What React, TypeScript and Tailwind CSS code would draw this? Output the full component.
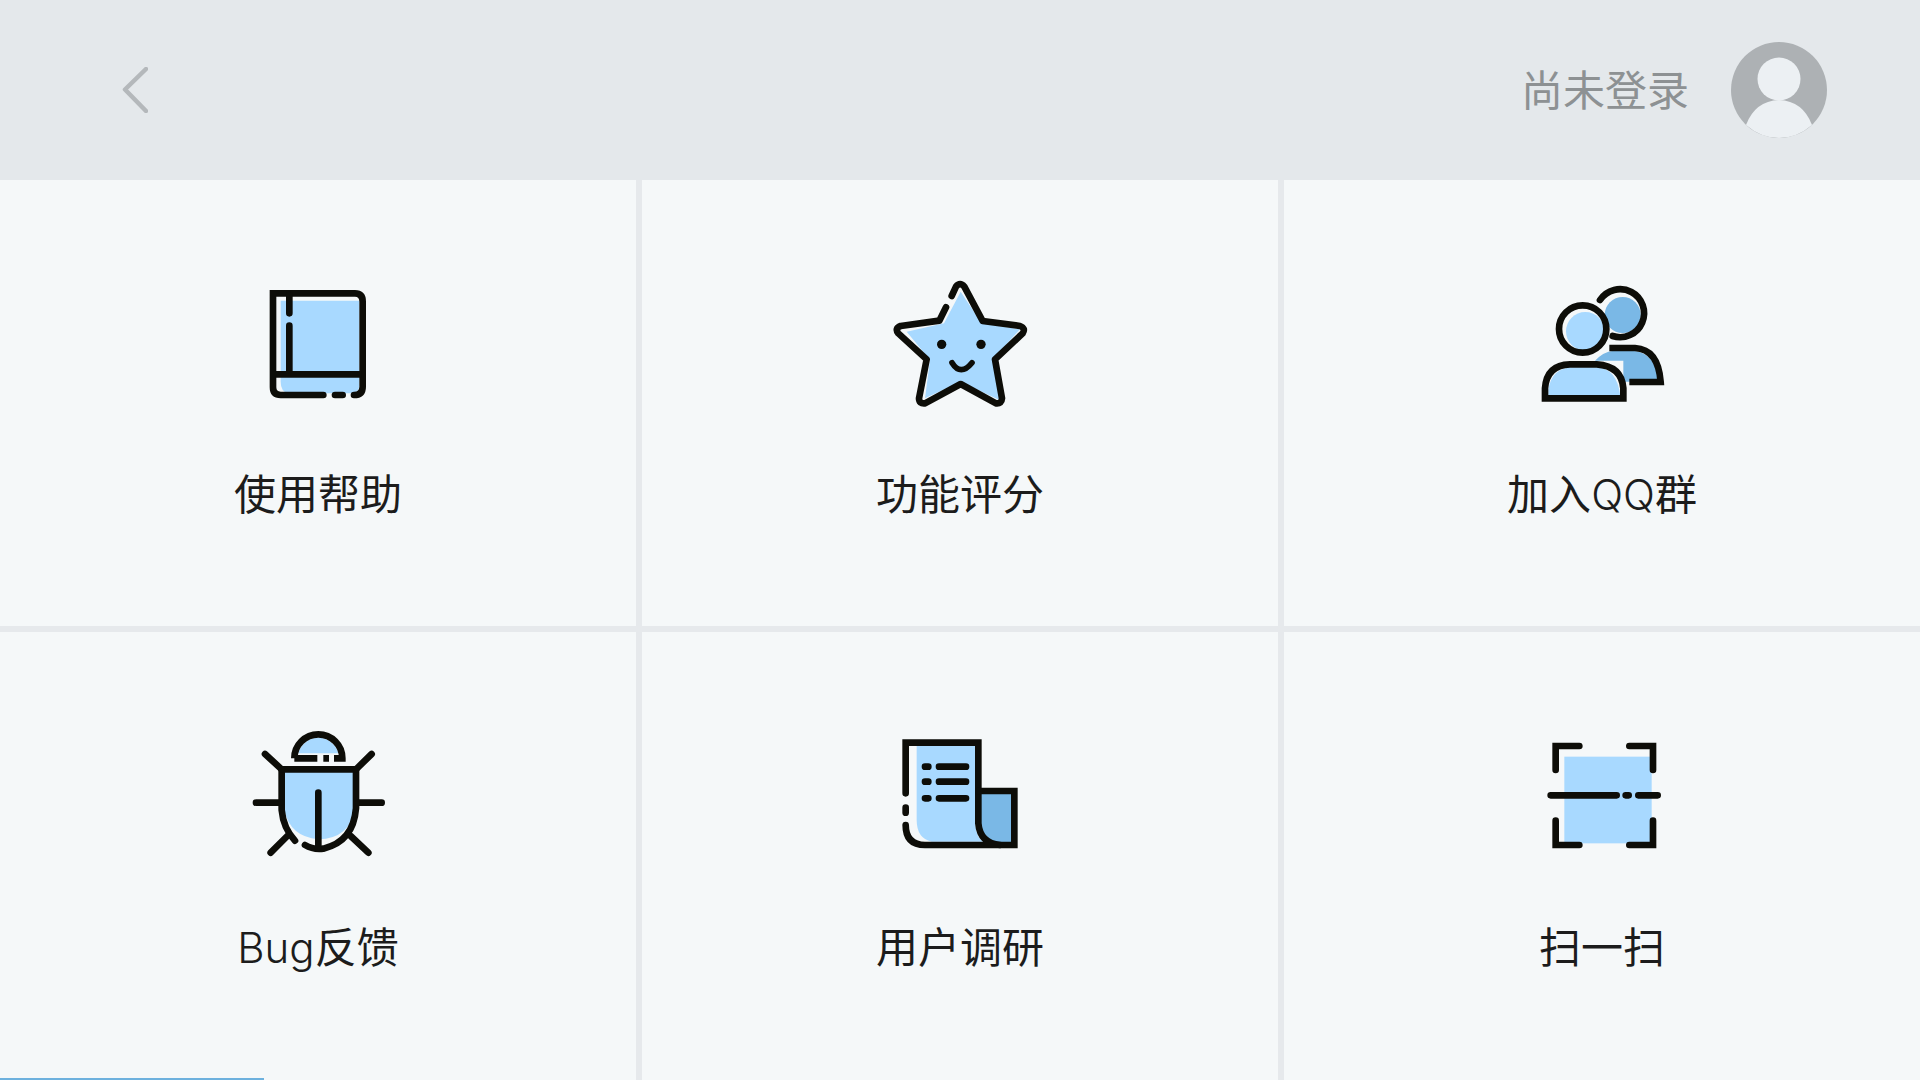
import React from "react";

const BLUE = "#a8d9ff";
const DARK = "#7ab8e6";
const INK = "#0d0d08";

function Ico({ vx = 0, children }: { vx?: number; children: React.ReactNode }) {
  return (
    <svg width={180} height={170} viewBox={`${vx} 0 540 510`} fill="none" stroke={INK} strokeWidth={20} strokeLinecap="round" strokeLinejoin="round">
      {children}
    </svg>
  );
}

const Book = () => (
  <Ico vx={-6}>
    <path d="M152 122H388V375Q388 400 362 400H175Q152 395 152 365Z" fill={BLUE} stroke="none" />
    <path d="M280 405H152Q129 405 129 382V100H375Q398 100 398 125V380Q398 405 372 405" strokeLinejoin="miter" />
    <path d="M315 405H338" />
    <path d="M178 105V160M178 197V340" />
    <path d="M137 343H395" strokeLinecap="butt" />
  </Ico>
);

const Star = () => (
  <Ico>
    <path d="M272 95L335 190L450 208L368 298L388 420L272 365L165 415L180 300L110 215L222 190Z" fill={BLUE} stroke="none" />
    <path d="M245 108L258 80Q270 65 283 80L338 183L450 198Q468 205 458 220L375 298L396 415Q395 432 378 430L272 372L165 430Q147 432 147 415L170 298L85 220Q73 205 92 198L208 182L228 142" />
    <circle cx="215" cy="253" r="14" fill={INK} stroke="none" />
    <circle cx="333" cy="253" r="14" fill={INK} stroke="none" />
    <path d="M246 308Q272 350 306 308" strokeWidth={17} />
  </Ico>
);

const Users = () => (
  <Ico vx={6}>
    <circle cx="338" cy="165" r="54" fill={DARK} stroke="none" />
    <path d="M255 302Q280 275 310 272H370Q440 280 444 365H340V302Z" fill={DARK} stroke="none" />
    <path d="M270 120A72 72 0 1 1 308 228" />
    <path d="M298 264H375Q445 268 452 366H358" strokeLinecap="butt" strokeLinejoin="miter" />
    <circle cx="226" cy="214" r="58" fill={BLUE} stroke="none" />
    <circle cx="218" cy="207" r="71" />
    <path d="M115 407V390Q125 322 190 322H260Q320 325 331 407Z" fill={BLUE} stroke="none" />
    <path d="M105 415V385Q110 315 180 313H260Q335 318 340 385V415Z" strokeLinejoin="miter" strokeLinecap="butt" />
  </Ico>
);

const Bug = () => (
  <Ico vx={-6}>
    <path d="M205 130A62 62 0 0 1 325 130Z" fill={BLUE} stroke="none" />
    <path d="M163 185H372V300Q360 385 265 388Q180 380 163 300Z" fill={BLUE} stroke="none" />
    <path d="M193 145A72 72 0 0 1 337 145H312M297 145H280M262 145H193" strokeLinecap="butt" strokeLinejoin="miter" />
    <path d="M155 178H378V295Q370 395 280 416Q250 420 225 405" strokeLinejoin="miter" />
    <path d="M155 178V300Q160 355 195 392" />
    <path d="M265 248V415" />
    <path d="M105 132L155 178M425 132L378 178M78 278H150M385 278H455M122 428L172 378M415 428L362 378" />
  </Ico>
);

const Doc = () => (
  <Ico>
    <path d="M140 108H316V345Q320 385 340 395H185Q140 385 140 330Z" fill={BLUE} stroke="none" />
    <path d="M333 252H424V396H375Q335 385 333 345Z" fill={DARK} stroke="none" />
    <path d="M107 250V98H325V340Q330 400 390 405" strokeLinejoin="miter" />
    <path d="M107 293V308" />
    <path d="M107 345Q107 405 165 405H433V243H325" strokeLinejoin="miter" />
    <path d="M165 170H175M207 170H288M165 215H175M207 215H288M165 265H175M207 265H288" />
  </Ico>
);

const Scan = () => (
  <Ico vx={6}>
    <rect x="163" y="140" width="262" height="260" fill={BLUE} stroke="none" />
    <path d="M137 180V108H208M358 108H429V180M137 332V405H208M358 405H429V332" strokeLinejoin="miter" />
    <path d="M122 256H320M347 256H356M385 256H443" />
  </Ico>
);

const items = [
  { key: "a", label: <>使用帮助</>, icon: <Book /> },
  { key: "b", label: <>功能评分</>, icon: <Star /> },
  { key: "c", label: <>加入<span className="font-light">QQ</span>群</>, icon: <Users /> },
  { key: "d", label: <><span className="font-light">Bug</span>反馈</>, icon: <Bug /> },
  { key: "e", label: <>用户调研</>, icon: <Doc /> },
  { key: "f", label: <>扫一扫</>, icon: <Scan /> },
];

const font = "font-['Inter','Noto_Sans_CJK_SC',sans-serif]";

export default function App() {
  return (
    <div className={`relative w-[1920px] h-[1080px] overflow-hidden bg-[#e6e9ec] ${font}`}>
      <header className="h-[180px] bg-[#e4e8eb] flex items-center justify-between pl-[122px] pr-[93px]">
        <svg width="26" height="46" viewBox="0 0 26 46" fill="none" stroke="#b4b8bb" strokeWidth="4.5" strokeLinecap="round" strokeLinejoin="round">
          <path d="M24 2L3 22.5L24 44" />
        </svg>
        <div className="flex items-center gap-[42px]">
          <span className="text-[42px] leading-[60px] text-[#8d9193] font-normal translate-y-[1px]">尚未登录</span>
          <svg width="96" height="96" viewBox="0 0 96 96">
            <circle cx="48" cy="48" r="48" fill="#adb1b4" />
            <circle cx="48" cy="37" r="21.5" fill="#ecf0f3" />
            <path d="M15 83Q24 59 48 58Q72 59 81 83Q66 96 48 96Q30 96 15 83Z" fill="#ecf0f3" />
          </svg>
        </div>
      </header>
      <div className="grid grid-cols-3 grid-rows-[446px_448px] gap-[6px]">
        {items.map((it, i) => (
          <div key={it.key} className={`bg-[#f5f8f9] flex flex-col items-center ${i < 3 ? "pt-[80px]" : "pt-[78px]"}`}>
            {it.icon}
            <span className={`text-[42px] leading-[60px] text-[#1c1c1c] font-normal ${i < 3 ? "mt-[35px]" : "mt-[38px]"}`}>{it.label}</span>
          </div>
        ))}
      </div>
      <div className="absolute left-0 bottom-0 w-[264px] h-[2px] bg-[#6db1de]" />
    </div>
  );
}
